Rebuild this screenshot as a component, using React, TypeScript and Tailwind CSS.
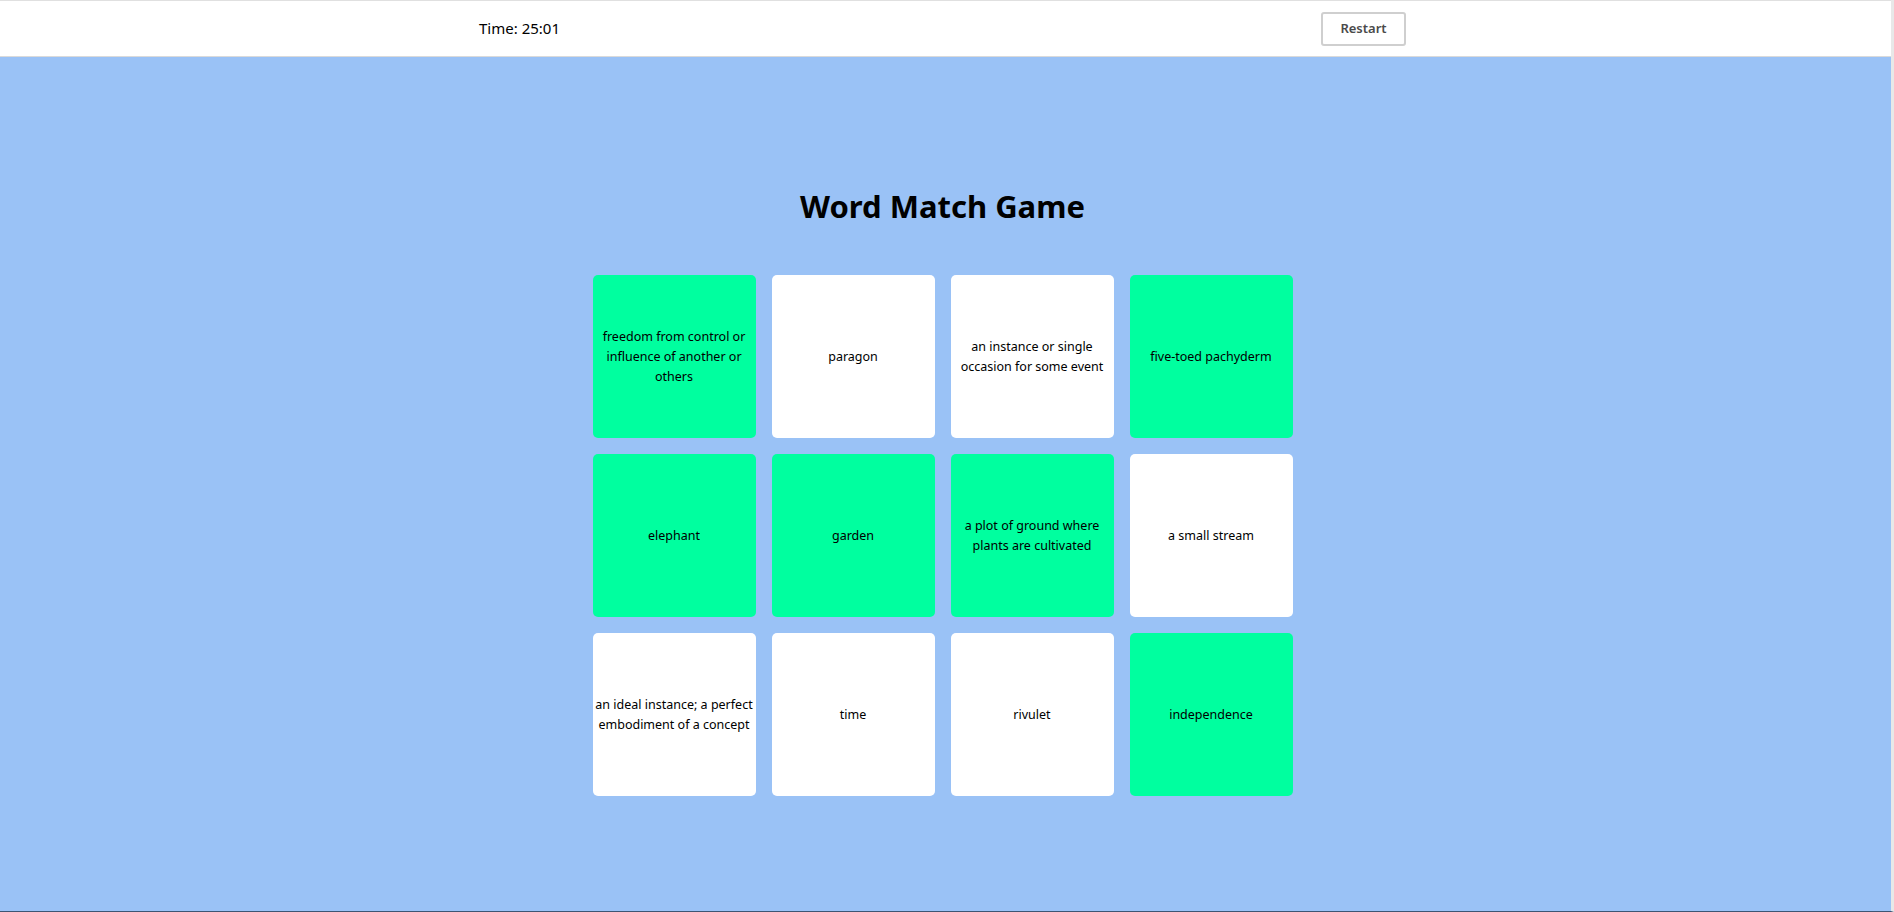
import React, { useState } from 'react';

interface Card {
  id: number;
  text: string;
  matched: boolean;
}

const cards: Card[] = [
  { id: 1, text: 'freedom from control or influence of another or others', matched: true },
  { id: 2, text: 'paragon', matched: false },
  { id: 3, text: 'an instance or single occasion for some event', matched: false },
  { id: 4, text: 'five-toed pachyderm', matched: true },
  { id: 5, text: 'elephant', matched: true },
  { id: 6, text: 'garden', matched: true },
  { id: 7, text: 'a plot of ground where plants are cultivated', matched: true },
  { id: 8, text: 'a small stream', matched: false },
  { id: 9, text: 'an ideal instance; a perfect embodiment of a concept', matched: false },
  { id: 10, text: 'time', matched: false },
  { id: 11, text: 'rivulet', matched: false },
  { id: 12, text: 'independence', matched: true },
];

export default function App() {
  const [time] = useState('25:01');

  return (
    <div className="min-h-screen flex flex-col bg-[#9ac2f6] border-r-[3px] border-r-[#e8e8e8] border-b border-b-[#3d5573] font-['Noto_Sans',sans-serif]">
      {/* Header */}
      <header className="h-[57px] shrink-0 bg-white border-t border-t-[#e0e0e0] border-b border-b-[#dadada] flex items-center justify-center pr-[6px]">
        <div className="w-[927px] flex items-center justify-between">
          <span className="text-[15px] text-black">Time: {time}</span>
          <button className="w-[85px] h-[34px] bg-white border-2 border-[#cfcfcf] rounded-[3px] text-[13px] font-semibold text-[#4a4a4a]">
            Restart
          </button>
        </div>
      </header>

      {/* Game */}
      <main className="flex-1 flex flex-col items-center pr-[6px]">
        <h1 className="mt-[127px] text-[31px] leading-[44px] font-bold text-black">Word Match Game</h1>
        <div className="mt-[47px] grid grid-cols-4 gap-x-4 gap-y-4 w-[700px]">
          {cards.map(card => (
            <div
              key={card.id}
              className={
                'h-[163px] rounded-[5px] flex items-center justify-center text-center px-0 text-[12.5px] leading-[20px] text-black ' +
                (card.matched ? 'bg-[#00ff9f]' : 'bg-white')
              }
            >
              {card.text}
            </div>
          ))}
        </div>
      </main>
    </div>
  );
}
